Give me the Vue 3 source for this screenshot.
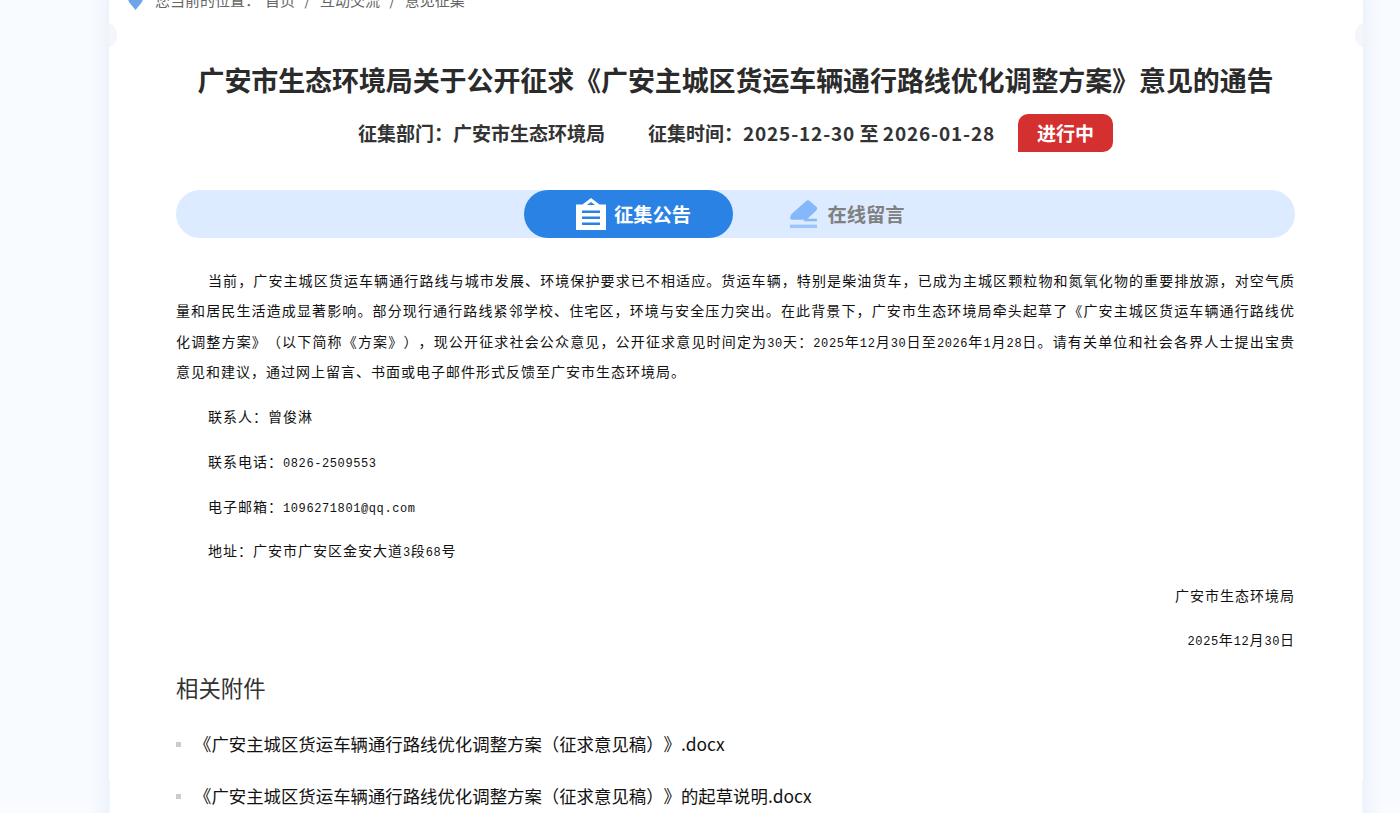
<template>
  <div class="page">
    <div class="card">
      <i class="notch notch--left"></i>
      <i class="notch notch--right"></i>
      <div class="crumb">
        <svg class="crumb-pin" viewBox="0 0 16 20" aria-hidden="true">
          <path d="M8 0C3.6 0 0 3.4 0 7.600c0 2.200 1 4.100 2.500 5.800L8 20l5.500-6.600C15 11.700 16 9.800 16 7.600 16 3.400 12.400 0 8 0z" fill="#6ea4ea" />
        </svg>
        <span class="crumb-lead">您当前的位置：</span>
        <span>首页</span><b>/</b><span>互动交流</span><b>/</b><span>意见征集</span>
      </div>

      <div class="main">
        <h1 class="title">广安市生态环境局关于公开征求《广安主城区货运车辆通行路线优化调整方案》意见的通告</h1>
        <div class="meta">
          <span>征集部门：广安市生态环境局</span>
          <span class="meta-time">征集时间：<em>2025-12-30</em> 至 <em>2026-01-28</em></span>
          <span class="status">进行中</span>
        </div>

        <div class="tabs">
          <div class="tab tab--on">
            <svg class="tab-icon" viewBox="0 0 30 32" aria-hidden="true">
              <path d="M15 0l8.500 6.500H30V32H0V6.500h6.500z" fill="#fff" />
              <path d="M15 4l-4 3h8z" fill="#2a82e4" />
              <path d="M6 12.500h18v2.500H6zM6 18.500h18V21H6zM6 24.500h18V27H6z" fill="#2a82e4" />
            </svg>
            <span>征集公告</span>
          </div>
          <div class="tab tab--off">
            <svg class="tab-icon tab-icon--pen" viewBox="0 0 30 30" aria-hidden="true">
              <path d="M17.500 1.200a3 3 0 0 1 4.200 0l6.300 5.600a3 3 0 0 1 0 4.300L18 20.500H4c-2 0-3-1-2.800-2.500.4-2 1.400-3.400 2.900-4.700z" fill="#84b8fb" />
              <path d="M17 19.500h11a1 1 0 0 1 1 1v1.500H15z" fill="#84b8fb" />
              <path d="M1 25.500h28V29H1z" fill="#9cc6fb" />
            </svg>
            <span>在线留言</span>
          </div>
        </div>

        <div class="article">
          <p class="indent">当前，广安主城区货运车辆通行路线与城市发展、环境保护要求已不相适应。货运车辆，特别是柴油货车，已成为主城区颗粒物和氮氧化物的重要排放源，对空气质量和居民生活造成显著影响。部分现行通行路线紧邻学校、住宅区，环境与安全压力突出。在此背景下，广安市生态环境局牵头起草了《广安主城区货运车辆通行路线优化调整方案》（以下简称《方案》），现公开征求社会公众意见，公开征求意见时间定为<span class="num">30</span>天：<span class="num">2025</span>年<span class="num">12</span>月<span class="num">30</span>日至<span class="num">2026</span>年<span class="num">1</span>月<span class="num">28</span>日。请有关单位和社会各界人士提出宝贵意见和建议，通过网上留言、书面或电子邮件形式反馈至广安市生态环境局。</p>
          <p class="indent">联系人：曾俊淋</p>
          <p class="indent">联系电话：<span class="num">0826-2509553</span></p>
          <p class="indent">电子邮箱：<span class="num">1096271801@qq.com</span></p>
          <p class="indent">地址：广安市广安区金安大道<span class="num">3</span>段<span class="num">68</span>号</p>
          <p class="right">广安市生态环境局</p>
          <p class="right"><span class="num">2025</span>年<span class="num">12</span>月<span class="num">30</span>日</p>
        </div>

        <h2 class="files-title">相关附件</h2>
        <ul class="files">
          <li v-for="f in files" :key="f">{{ f }}</li>
        </ul>
      </div>
    </div>
  </div>
</template>

<script setup>
const files = [
  '《广安主城区货运车辆通行路线优化调整方案（征求意见稿）》.docx',
  '《广安主城区货运车辆通行路线优化调整方案（征求意见稿）》的起草说明.docx',
]
</script>

<style>
html, body { margin: 0; background: #f8fbff; }
</style>

<style scoped>
.page {
  height: 813px;
  overflow: hidden;
  padding-left: 109px;
  box-sizing: border-box;
  background: #f8fbff;
  font-family: "Noto Sans CJK SC", "Noto Sans", sans-serif;
  text-spacing-trim: space-all;
}
.card {
  position: relative;
  width: 1254px;
  height: 900px;
  margin-top: -10px;
  background: #fff;
  border-radius: 12px;
  box-shadow: 0 0 22px rgba(50, 100, 190, 0.1);
}
/* 只露出卡片内侧的半圆缺口 */
.notch {
  position: absolute;
  top: 32px;
  width: 10px;
  height: 26px;
}
.notch--left { left: 0; background: radial-gradient(circle at -5px 13px, #f3f7fc 13px, transparent 13.5px); }
.notch--right { right: 0; background: radial-gradient(circle at 15px 13px, #f3f7fc 13px, transparent 13.5px); }
.card::before, .card::after {
  content: "";
  position: absolute;
  top: 790px;
  bottom: 0;
  width: 1px;
  background: #f3f7fc;
}
.card::before { left: 0; }
.card::after { right: 0; }

.crumb {
  display: flex;
  align-items: center;
  height: 20px;
  padding-left: 19px;
  font-size: 15px;
  line-height: 20px;
  color: #666;
}
.crumb-pin { width: 15px; height: 19px; margin-right: 12px; }
.crumb-lead { margin-right: 5px; }
.crumb b { margin: 0 9.5px; font-weight: 400; }

.main { padding: 0 68px 0 67px; }
.title {
  margin: 50px 0 0;
  font-size: 27px;
  line-height: 40px;
  font-weight: 700;
  letter-spacing: -0.1px;
  color: #2b2b2b;
  text-align: center;
  white-space: nowrap;
}
.meta {
  display: flex;
  justify-content: center;
  align-items: center;
  margin-top: 14px;
  font-size: 19px;
  font-weight: 700;
  line-height: 38px;
  color: #333;
}
.meta-time { margin-left: 43px; }
.meta-time em { font-style: normal; letter-spacing: 0.85px; }
.status {
  margin-left: 23px;
  width: 95px;
  text-align: center;
  color: #fff;
  background: #d53030;
  border-radius: 10px 10px 10px 0;
}

.tabs {
  display: flex;
  justify-content: center;
  height: 48px;
  margin-top: 38px;
  border-radius: 24px;
  background: #dcebff;
}
.tab {
  display: flex;
  align-items: center;
  justify-content: center;
  gap: 8px;
  width: 209px;
  box-sizing: border-box;
  border-radius: 24px;
  font-size: 19.3px;
  font-weight: 700;
  color: #808080;
}
.tab--on { background: #2a82e4; color: #fff; padding-left: 10px; }
.tab--off { width: 214px; padding-left: 14px; gap: 9px; }
.tab-icon { width: 30px; height: 32px; }
.tab-icon--pen { width: 29px; height: 29px; }

.article {
  margin-top: 27px;
  font-size: 14px;
  line-height: 30.4px;
  letter-spacing: 1px;
  color: #111;
  text-align: justify;
}
.article p { margin: 0 0 14.4px; }
.indent { text-indent: 32px; }
.article .right { text-align: right; margin-top: -0.5px; }
.num {
  font-family: "Liberation Mono", monospace;
  font-size: 12px;
  line-height: 0;
  letter-spacing: 0.6px;
}
.files-title {
  margin: 16px 0 0;
  font-size: 22.4px;
  line-height: 34px;
  font-weight: 400;
  color: #333;
}
.files {
  margin: 23px 0 0;
  padding: 0;
  list-style: none;
}
.files li {
  position: relative;
  padding-left: 18px;
  font-size: 17.4px;
  line-height: 34px;
  margin-bottom: 18px;
  color: #111;
}
.files li::before {
  content: "";
  position: absolute;
  left: 0;
  top: 15px;
  width: 5px;
  height: 5px;
  background: #ccc;
}
</style>
